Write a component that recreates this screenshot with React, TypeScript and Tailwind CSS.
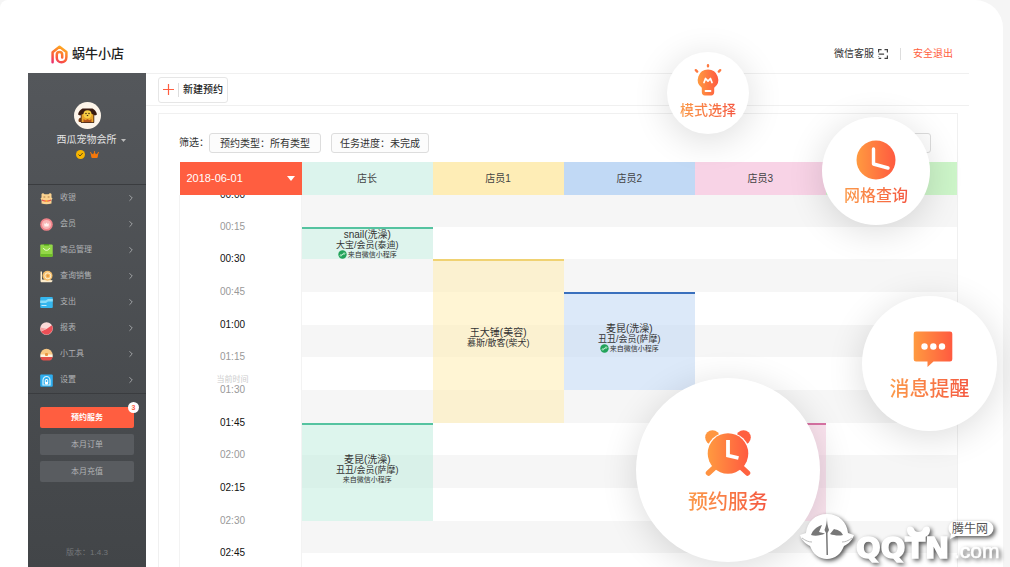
import React, { useState } from 'react'
import { FaCrown } from 'react-icons/fa6'
import { LuChevronRight } from 'react-icons/lu'

type Booking = {
  title: string
  sub: string
  wechat: boolean
  icon?: boolean
  start: number
  rows: number
  staff: number
  color: string
}

const staffList = [
  { name: '店长', head: 'bg-[#dcf4ed]' },
  { name: '店员1', head: 'bg-[#feedb6]' },
  { name: '店员2', head: 'bg-[#c1d9f5]' },
  { name: '店员3', head: 'bg-[#f8d3e6]' },
  { name: '店员4', head: 'bg-[#cdf5c9]' },
]

const times = ['00:00', '00:15', '00:30', '00:45', '01:00', '01:15', '01:30', '01:45', '02:00', '02:15', '02:30', '02:45']
const boldTimes = ['00:00', '00:30', '01:00', '01:45', '02:15', '02:45']

const bookings: Booking[] = [
  { title: 'snail(洗澡)', sub: '大宝/会员(泰迪)', wechat: true, icon: true, start: 1, rows: 1, staff: 0, color: 'border-[#55c3a0] bg-[#def4ed]' },
  { title: '王大锤(美容)', sub: '慕斯/散客(柴犬)', wechat: false, start: 2, rows: 5, staff: 1, color: 'border-[#f0d272] bg-[#ffeeb8]/60' },
  { title: '麦昆(洗澡)', sub: '丑丑/会员(萨摩)', wechat: true, icon: true, start: 3, rows: 3, staff: 2, color: 'border-[#3a70bd] bg-[#c4daf5]/60' },
  { title: '麦昆(洗澡)', sub: '丑丑/会员(萨摩)', wechat: true, start: 7, rows: 3, staff: 0, color: 'border-[#55c3a0] bg-[#bcebdc]/50' },
  { title: '', sub: '', wechat: false, start: 7, rows: 3, staff: 3, color: 'border-[#d973a4] bg-[#f6d0e2]/60' },
]

const rowHeight = (i: number) => (i === 0 || i % 3 === 1 ? 32 : 33)

const bookingHeight = (b: Booking) => {
  let total = 0
  for (let i = b.start; i < b.start + b.rows; i++) total += rowHeight(i)
  return total
}

const Logo = () => (
  <svg className="h-[19px] w-[17px]" viewBox="0 0 17 19" fill="none">
    <defs>
      <linearGradient id="logo" x1="0" y1="19" x2="10" y2="0" gradientUnits="userSpaceOnUse">
        <stop stopColor="#e6237e" />
        <stop offset=".4" stopColor="#fb5a3c" />
        <stop offset="1" stopColor="#ffb01f" />
      </linearGradient>
    </defs>
    <path
      d="M1.600 17.300V7.200L8.500 1.800l6.900 5.300v5c0 3.200-2.100 5.200-4.900 5.200s-4.700-2-4.700-4.600v-2.900c0-1.500 1.200-2.700 2.700-2.700s2.700 1.200 2.700 2.700v2.600"
      stroke="url(#logo)"
      strokeWidth="2.500"
      strokeLinecap="round"
      strokeLinejoin="round"
    />
  </svg>
)

const ScanIcon = () => (
  <svg className="size-[10px]" viewBox="0 0 10 10" fill="none" stroke="#444" strokeWidth="1.200">
    <path d="M.6 3.500V.6h3M6.500.6h2.900v2.900M9.400 6.500v2.900H6.500M.6 5.200h5.500M.6 7v.6M.6 9.400h2.600" />
  </svg>
)

const DogAvatar = () => (
  <svg className="size-[27px]" viewBox="0 0 27 27">
    <circle cx="13.500" cy="13.500" r="13.500" fill="#fdf5ea" />
    <path d="M4.500 18.500c0-2 1.500-3 2.500-2.500v4H6c-1 0-1.500-.5-1.500-1.500Z" fill="#7a3d14" />
    <path d="M7 11h13v9.500H7z" fill="#e9a42a" />
    <path d="M8.500 6.500h10c2 1 4 3 4.500 6l-2 1-3-1.500-4.500-2.500L9 12l-3 1.500-2-1c.5-3 2.500-5 4.500-6Z" fill="#3a1c10" />
    <circle cx="13.500" cy="12.200" r="4" fill="#f6cd45" />
    <circle cx="12" cy="11.500" r=".7" fill="#2b160c" />
    <circle cx="15" cy="11.500" r=".7" fill="#2b160c" />
    <path d="M12.500 13h2l-1 1.300Z" fill="#2b160c" />
    <path d="M9.500 20.500v-3.500l2 1.300 2-1.300 2 1.300 2-1.300v3.500Z" fill="#b4551a" />
    <path d="M7 20.500h13M7.200 13v7.500M19.800 13v7.500" stroke="#3a1c10" strokeWidth=".8" />
  </svg>
)

const CashIcon = () => (
  <svg className="size-[13px]" viewBox="0 0 13 13">
    <path d="M1.500 2 3 1l1.500 1.200h4L10 1l1.500 1v3.500l1 1-1 1.500v3.500c-3 1-7 1-10 0V8l-1-1.500 1-1Z" fill="#fbd390" />
    <path d="M2 7.500c3 1.200 6 1.200 9 0v1.300c-3 1.200-6 1.200-9 0Z" fill="#e9554d" />
    <path d="M3.500 5h1.800M7.700 5h1.800" stroke="#8f5a2a" strokeWidth=".7" />
    <circle cx="6.500" cy="9" r="1" fill="#ffb42e" />
  </svg>
)

const MemberIcon = () => (
  <svg className="size-[13px]" viewBox="0 0 13 13">
    <circle cx="6.500" cy="6.500" r="6.300" fill="#f0838a" />
    <circle cx="6.500" cy="6.500" r="4.600" fill="#f9b6b6" />
    <path d="M4 5.200 5.300 6l1.200-1.500L7.700 6 9 5.200 8.500 8.500h-4Z" fill="#fff1ee" />
  </svg>
)

const GoodsIcon = () => (
  <svg className="size-[13px]" viewBox="0 0 13 13">
    <rect x=".3" y=".5" width="12.400" height="12.200" rx="1" fill="#93d847" />
    <path d="M.3 10h12.400v1.700a1 1 0 0 1-1 1H1.300a1 1 0 0 1-1-1Z" fill="#6dbb2a" />
    <path d="M4 0h5v1.500H4z" fill="#4f9a1f" />
    <path d="M3.500 4c.5 3 5.500 3 6 0" stroke="#f1ffd9" strokeWidth="1" fill="none" />
  </svg>
)

const SalesIcon = () => (
  <svg className="size-[13px]" viewBox="0 0 13 13">
    <path d="M.5 1.500h1.500v8l10.500.8c0 1.400-.8 2-2 2H2c-1 0-1.500-.6-1.500-1.600Z" fill="#fdeccb" />
    <circle cx="7.500" cy="5.800" r="5" fill="#f6bf6b" />
    <circle cx="7.800" cy="5.800" r="3" fill="none" stroke="#fff0d2" strokeWidth="1" />
    <circle cx="7.800" cy="5.800" r="1.200" fill="#e8963a" />
  </svg>
)

const ExpenseIcon = () => (
  <svg className="size-[13px]" viewBox="0 0 13 13">
    <rect x=".2" y="1" width="12.600" height="11" rx="1" fill="#35b6ee" />
    <path d="M.2 4.500h5.500L8 3h4.800v2.500H8L6 7H.2Z" fill="#8adcf8" />
    <path d="M1.500 9.500h5" stroke="#e8faff" strokeWidth=".8" />
  </svg>
)

const ReportIcon = () => (
  <svg className="size-[13px]" viewBox="0 0 13 13">
    <circle cx="6.500" cy="6.500" r="6.300" fill="#fbdad8" />
    <path d="M1 9.600 6.500 7l5.400-3.700A6.300 6.300 0 0 1 1 9.600Z" fill="#ec4f56" />
    <path d="M6.500 6.800.9 9.400A6.200 6.200 0 0 1 .3 5.500Z" fill="#f4a3a3" />
  </svg>
)

const ToolsIcon = () => (
  <svg className="size-[13px]" viewBox="0 0 13 13">
    <path d="M.5 7a6 6.300 0 0 1 12 0Z" fill="#f9c884" />
    <path d="M.3 6.500h12.400v2.800H.3z" fill="#fff3df" />
    <path d="M.5 9h12c-.3 2.500-1.500 3.500-3 3.500h-6c-1.500 0-2.700-1-3-3.500Z" fill="#e3514b" />
    <rect x="5" y="5" width="3" height="3" rx="1" fill="#e9963f" />
  </svg>
)

const SettingsIcon = () => (
  <svg className="size-[13px]" viewBox="0 0 13 13">
    <rect x=".2" y=".5" width="12.600" height="12.200" rx="1" fill="#2eaef0" />
    <path d="M3 11V6.300a3.500 3.800 0 0 1 7 0V11Z" fill="none" stroke="#d5f3fe" strokeWidth="1.200" />
    <rect x="4.800" y="5" width="3.400" height="5.500" rx="1.500" fill="#fff" />
    <circle cx="6.500" cy="7" r=".9" fill="#2eaef0" />
  </svg>
)

const menu = [
  { label: '收银', icon: <CashIcon /> },
  { label: '会员', icon: <MemberIcon /> },
  { label: '商品管理', icon: <GoodsIcon /> },
  { label: '查询销售', icon: <SalesIcon /> },
  { label: '支出', icon: <ExpenseIcon /> },
  { label: '报表', icon: <ReportIcon /> },
  { label: '小工具', icon: <ToolsIcon /> },
  { label: '设置', icon: <SettingsIcon /> },
]

const MiniProgramIcon = () => (
  <svg className="size-[9px]" viewBox="0 0 9 9">
    <circle cx="4.500" cy="4.500" r="4.200" fill="#22a35a" />
    <path d="M3.800 5.200c-.3 1.400-2 1-1.600-.1.200-.6.900-.7 1.200-.6M5.200 3.800c.3-1.400 2-1 1.600.1-.2.600-.9.700-1.200.6M3.800 5.300l1.400-1.600" stroke="#e3ffee" strokeWidth=".8" fill="none" />
  </svg>
)

const BookingCard = ({ booking }: { booking: Booking }) => (
  <div
    className={`absolute inset-x-0 top-0 flex flex-col items-center justify-center border-t-2 text-[#333] ${booking.rows > 1 ? 'pb-2' : ''} ${booking.color}`}
    style={{ height: bookingHeight(booking) }}
  >
    <p className="text-[10px] leading-[10px]">{booking.title}</p>
    <p className="text-[9px] leading-[10px]">{booking.sub}</p>
    {booking.wechat && (
      <p className="flex items-center gap-px text-[7px] leading-[9px]">
        {booking.icon && <MiniProgramIcon />}来自微信小程序
      </p>
    )}
  </div>
)

const Sidebar = () => {
  const [active, setActive] = useState('预约服务')

  return (
    <aside className="flex w-[118px] shrink-0 flex-col bg-linear-to-b from-[#54575b] to-[#424548] text-[#b0b2b4]">
      <div className="flex h-[112px] flex-col items-center border-b border-[#3a3c3f] pt-[29px]">
        <DogAvatar />
        <button className="mt-1 ml-2 flex items-center gap-1 text-[10px] leading-[14px] text-[#e4e4e4]">
          西瓜宠物会所
          <svg className="h-[3px] w-[5px]" viewBox="0 0 5 3"><path d="M0 0h5L2.500 3Z" fill="#bbb" /></svg>
        </button>
        <div className="mt-[3px] flex items-center gap-[5px]">
          <svg className="size-[9px]" viewBox="0 0 9 9">
            <circle cx="4.500" cy="4.500" r="4.500" fill="#f7b500" />
            <path d="m2.500 4.500 1.500 1.500 2.700-3" stroke="#5a4a1a" strokeWidth="1" fill="none" />
          </svg>
          <FaCrown size={9} className="text-[#f5780a]" />
        </div>
      </div>
      <nav className="border-b border-[#3a3c3f]">
        {menu.map((item) => (
          <a key={item.label} href="#" className="flex h-[26px] items-center gap-[7px] pr-[10px] pl-3 text-[8px]">
            {item.icon}
            <span className="flex-1">{item.label}</span>
            <LuChevronRight size={10} />
          </a>
        ))}
      </nav>
      <div className="flex flex-col gap-[6px] px-3 pt-[13px] text-[8px]">
        {['预约服务', '本月订单', '本月充值'].map((label) => (
          <button
            key={label}
            onClick={() => setActive(label)}
            className={`relative h-[21px] rounded-[2px] ${active === label ? 'bg-[#ff5e40] font-bold text-white' : 'bg-[#595c60]'}`}
          >
            {label}
            {label === '预约服务' && (
              <span className="absolute -top-[5px] -right-[5px] flex size-[11px] items-center justify-center rounded-full bg-white text-[7px] leading-[11px] text-[#ff5e40]">
                3
              </span>
            )}
          </button>
        ))}
      </div>
      <p className="mt-auto pb-2 text-center text-[8px] leading-3 text-[#74777a]">版本：1.4.3</p>
    </aside>
  )
}

const Schedule = () => (
  <table className="w-full table-fixed border-collapse text-[10px]">
    <thead>
      <tr className="h-[33px]">
        <th className="relative z-10 w-[122px] bg-[#ff5e40] p-0 font-normal text-white">
          <button className="flex w-full items-center justify-between px-[7px] text-[11px]">
            2018-06-01
            <svg className="h-[5px] w-[8px]" viewBox="0 0 8 5"><path d="M0 0h8L4 5Z" fill="#fff" /></svg>
          </button>
        </th>
        {staffList.map((staff) => (
          <th key={staff.name} scope="col" className={`p-0 font-normal text-[#444] ${staff.head}`}>{staff.name}</th>
        ))}
      </tr>
    </thead>
    <tbody>
      {times.map((time, i) => (
        <tr key={time} style={{ height: rowHeight(i) }}>
          <th scope="row" className="border-x border-[#f3f3f3] p-0 pr-4 align-top font-normal">
            <div className="flex h-0 items-center justify-center">
              <span className={`relative leading-3 ${boldTimes.includes(time) ? 'text-[#111]' : 'text-[#999]'}`}>
                {time}
                {time === '01:30' && (
                  <span className="absolute bottom-full left-1/2 -translate-x-1/2 text-[8px] leading-[8px] whitespace-nowrap text-[#ccc]">
                    当前时间
                  </span>
                )}
              </span>
            </div>
          </th>
          {staffList.map((staff, s) => {
            const booking = bookings.find((item) => item.start === i && item.staff === s)
            return (
              <td key={staff.name} className={`p-0 ${i % 2 === 0 ? 'bg-[#f6f6f6]' : ''} ${booking ? 'relative' : ''}`}>
                {booking && <BookingCard booking={booking} />}
              </td>
            )
          })}
        </tr>
      ))}
    </tbody>
  </table>
)

const BulbIcon = () => (
  <svg className="h-[32px] w-[28px]" viewBox="0 0 28 32">
    <path d="M14 5.500a10.200 10.200 0 0 0-6.200 18.300V28c0 2 1.200 3.500 3 3.500h6.400c1.800 0 3-1.500 3-3.500v-4.200A10.200 10.200 0 0 0 14 5.500Z" fill="url(#orange)" />
    <path d="M14 1.200v1M1.800 6.200l1.400 1.400M26.200 6.200l-1.400 1.400" stroke="#ff7a40" strokeWidth="2.400" strokeLinecap="round" />
    <path d="m10 18.500 1.500-4 2.500 2.700 2.500-2.700 1.500 4" stroke="#fff" strokeWidth="1.700" strokeLinecap="round" strokeLinejoin="round" fill="none" />
    <path d="M11.500 27h5" stroke="#fff" strokeWidth="1.800" strokeLinecap="round" />
  </svg>
)

const ClockIcon = () => (
  <svg className="size-[40px]" viewBox="0 0 40 40">
    <circle cx="20" cy="20" r="19.500" fill="url(#orange)" />
    <path d="M17.500 9v15L32 28" stroke="#fff" strokeWidth="3.400" strokeLinecap="round" strokeLinejoin="round" fill="none" />
  </svg>
)

const MessageIcon = () => (
  <svg className="h-[36px] w-[46px]" viewBox="-6 0 46 36">
    <path d="M3 .5h34a2.300 2.300 0 0 1 2.300 2.300v25.400a2.300 2.300 0 0 1-2.300 2.300H20.500L14.500 36v-5.500H3A2.300 2.300 0 0 1 .7 28.200V2.800A2.300 2.300 0 0 1 3 .5Z" fill="url(#orange)" />
    <circle cx="11.500" cy="15.500" r="3.200" fill="#fff" />
    <circle cx="20.300" cy="15.500" r="3.200" fill="#fff" />
    <circle cx="29" cy="15.500" r="3.200" fill="#fff" />
  </svg>
)

const AlarmIcon = () => (
  <svg className="size-[46px]" viewBox="0 0 46 46">
    <circle cx="7.500" cy="7.500" r="7.300" fill="#ff9640" />
    <circle cx="38.500" cy="7.500" r="7.300" fill="#ff5f40" />
    <path d="m10 37-6.500 6" stroke="#ff9240" strokeWidth="5.500" strokeLinecap="round" />
    <path d="m36 37 6.500 6" stroke="#ff6240" strokeWidth="5.500" strokeLinecap="round" />
    <path d="M1.500 23.500a21.500 21.500 0 0 1 43 0Z" fill="#fff" />
    <circle cx="23" cy="23.500" r="20.300" fill="url(#orange)" />
    <path d="M23 10v15.500l10.500 2.500" stroke="#fff" strokeWidth="3.800" fill="none" />
  </svg>
)

const Bubble = ({ className, icon, label }: { className: string; icon: React.ReactNode; label: string }) => (
  <div className={`absolute flex flex-col items-center rounded-full bg-white font-medium shadow-[0_6px_36px_rgba(0,0,0,0.14)] ${className}`}>
    {icon}
    <span className="bg-linear-to-r from-[#fb9a4a] to-[#f45640] bg-clip-text text-transparent">{label}</span>
  </div>
)

const SiteMark = () => (
  <svg className="absolute right-0 bottom-0 h-[62px] w-[215px]" viewBox="0 0 215 62">
    <g className="drop-shadow-[2px_2px_2px_rgba(0,0,0,0.65)]">
      <path d="M11 28C12 17 20 9 32 9s20 8 21 19l6 2c-2 6-6 9-10 11-3 8-9 13-17 13s-14-5-17-13C11 39 7 36 5 30Z" fill="#fff" />
      <path d="M112 25c0-5 6-4 7-1 1 4 8 4 9 0 1-3 7-4 7 1 0 6-5 8-11.500 8S112 31 112 25Z" fill="#fff" />
      <text x="61" y="53" fontSize="29" fontWeight="700" fill="#fff" stroke="#fff" strokeWidth="1.500" fontFamily="'DejaVu Sans', sans-serif">QQTN</text>
      <text x="159" y="53" fontSize="21" fill="#fff" stroke="#fff" strokeWidth=".6" fontFamily="'Liberation Sans', sans-serif">.com</text>
      <path d="M160 16h31a7.500 7.500 0 0 1 0 15h-30l-6 3 1-5a7.500 7.500 0 0 1 4-13Z" fill="#fff" />
    </g>
    <path d="M32 12c0 5 .5 9 2 13l-1.500 3 .5 22h-1.500l-.5-22-1.500-3c1.500-4 2.500-8 2.500-13Z" fill="#777" />
    <path d="M16 30c2-5 5-8 11-10l-3 7 6 1.500c-4 2-10 3-14 1.500ZM48 30c-2-4-5-5-9-6l-4 5c4 1.500 9 2 13 1Z" fill="#777" />
    <path d="M7 33c4 3 7 4 10 4M57 33c-4 3-7 4-10 4" stroke="#bbb" fill="none" />
    <text x="157" y="28" fontSize="12" fill="#555" fontFamily="'Noto Sans CJK SC', sans-serif">腾牛网</text>
  </svg>
)

export default function App() {
  return (
    <div className="relative h-screen overflow-hidden bg-[#f5f5f5] pr-[7px] font-['Liberation_Sans','Noto_Sans_CJK_SC',sans-serif]">
      <svg className="absolute size-0">
        <defs>
          <linearGradient id="orange">
            <stop stopColor="#ff9a40" />
            <stop offset="1" stopColor="#ff5a40" />
          </linearGradient>
        </defs>
      </svg>
      <div className="flex h-full flex-col rounded-tl-[8px] rounded-tr-[28px] bg-white pr-[34px] pl-7">
        <header className="flex h-[73px] shrink-0 items-end justify-between pr-4 pb-[9px] pl-[23px]">
          <h1 className="flex items-center gap-1 text-[13px] leading-5 font-medium text-[#222]">
            <Logo />
            蜗牛小店
          </h1>
          <div className="flex items-center text-[10px] leading-5">
            <a href="#" className="flex items-center gap-1 text-[#333]">
              微信客服
              <ScanIcon />
            </a>
            <span className="mx-3 h-3 w-px bg-[#ddd]" />
            <a href="#" className="text-[#ff5e40]">安全退出</a>
          </div>
        </header>
        <div className="flex min-h-0 flex-1">
          <Sidebar />
          <main className="flex min-w-0 flex-1 flex-col border-t border-[#f0f0f0]">
            <div className="flex h-8 shrink-0 items-center border-b border-[#f0f0f0] pl-3">
              <button className="flex h-[26px] items-center rounded-[3px] border border-[#e6e6e6] px-1 text-[10px] font-medium text-[#222]">
                <svg className="size-[11px]" viewBox="0 0 11 11"><path d="M5.500 0v11M0 5.500h11" stroke="#ff5e40" strokeWidth="1.200" /></svg>
                <span className="mx-1 h-[14px] w-px bg-[#ddd]" />
                新建预约
              </button>
            </div>
            <section className="mt-[7px] mr-[11px] ml-3 min-h-0 flex-1 overflow-hidden border border-b-0 border-[#f0f0f0] pl-5">
              <div className="flex h-[48px] items-end pr-[26px] pb-[9px] text-[10px] text-[#333]">
                <span className="w-[30px] leading-[20px] whitespace-nowrap">筛选：</span>
                <button className="mr-[10px] h-[20px] rounded-[3px] border border-[#ddd] bg-[#fcfcfc] px-[10px]">预约类型：所有类型</button>
                <button className="h-[20px] rounded-[3px] border border-[#ddd] bg-[#fcfcfc] px-2">任务进度：未完成</button>
                <button className="ml-auto h-[20px] w-[60px] rounded-[3px] border border-[#ddd]" aria-label="更多" />
              </div>
              <Schedule />
            </section>
          </main>
        </div>
      </div>

      <Bubble className="top-[52px] right-[261px] size-[82px] gap-1 pt-3 text-[14px] leading-5" icon={<BulbIcon />} label="模式选择" />
      <Bubble className="top-[117px] right-[80px] size-[108px] gap-1 pt-[23px] text-[16px] leading-6" icon={<ClockIcon />} label="网格查询" />
      <Bubble className="top-[296px] right-[13px] size-[135px] gap-2 pt-[35px] text-[20px] leading-7" icon={<MessageIcon />} label="消息提醒" />
      <Bubble className="top-[378px] right-[190px] size-[184px] gap-3 pt-[52px] text-[20px] leading-7" icon={<AlarmIcon />} label="预约服务" />
      <SiteMark />
    </div>
  )
}
